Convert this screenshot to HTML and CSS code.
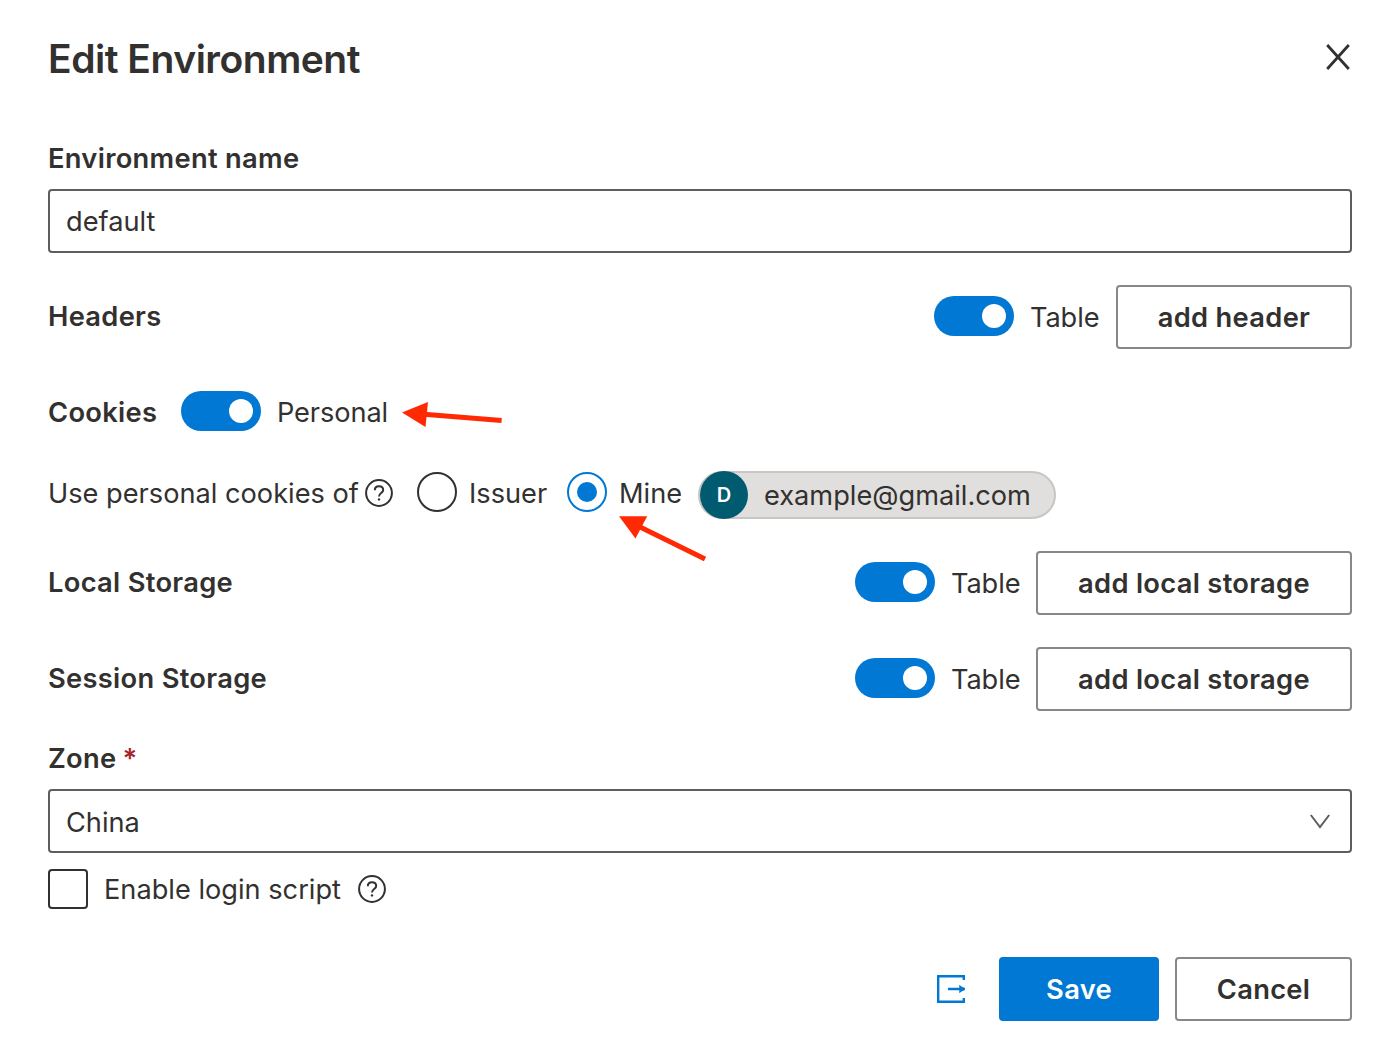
FILE: index.html
```html
<!DOCTYPE html>
<html lang="en">
<head>
<meta charset="utf-8">
<title>Edit Environment</title>
<link rel="stylesheet" href="styles.css">
</head>
<body>
<main class="dialog">
  <header class="dialog-header">
    <h1 class="title">Edit Environment</h1>
    <svg class="close" width="24" height="26" viewBox="0 0 24 26"><path d="M1.2 1L22.8 25M22.8 1L1.2 25"/></svg>
  </header>

  <div class="label name-label">Environment name</div>
  <div class="field"><span class="text">default</span></div>

  <section class="row headers">
    <div class="label">Headers</div>
    <div class="actions">
      <span class="toggle"></span>
      <span class="text toggle-text">Table</span>
      <div class="button add-header">add header</div>
    </div>
  </section>

  <section class="row cookies">
    <div class="label cookies-label">Cookies</div>
    <span class="toggle"></span>
    <span class="text toggle-text">Personal</span>
  </section>

  <section class="row owner">
    <span class="text owner-text">Use personal cookies of</span>
    <svg class="help" width="28" height="28" viewBox="0 0 28 28"><circle cx="14" cy="14" r="12.9"/><path d="M9.8 11.2C9.8 8.6 11.6 7.2 14 7.2S18.2 8.7 18.2 10.9C18.2 14 14 14 14 17.4"/><circle class="dot" cx="14" cy="20.4" r="1.2"/></svg>
    <span class="radio"></span>
    <span class="text issuer">Issuer</span>
    <span class="radio checked"></span>
    <span class="text mine">Mine</span>
    <div class="persona"><span class="avatar">D</span><span class="text">example@gmail.com</span></div>
  </section>

  <section class="row local">
    <div class="label">Local Storage</div>
    <div class="actions">
      <span class="toggle"></span>
      <span class="text toggle-text">Table</span>
      <div class="button add-storage">add local storage</div>
    </div>
  </section>

  <section class="row session">
    <div class="label">Session Storage</div>
    <div class="actions">
      <span class="toggle"></span>
      <span class="text toggle-text">Table</span>
      <div class="button add-storage">add local storage</div>
    </div>
  </section>

  <div class="label zone-label">Zone<span class="required">*</span></div>
  <div class="field select">
    <span class="text">China</span>
    <svg class="chevron" width="20" height="15" viewBox="0 0 20 15"><path d="M.8 1L10 13.2L19.2 1"/></svg>
  </div>

  <section class="row login">
    <span class="checkbox"></span>
    <span class="text login-text">Enable login script</span>
    <svg class="help" width="28" height="28" viewBox="0 0 28 28"><circle cx="14" cy="14" r="12.9"/><path d="M9.8 11.2C9.8 8.6 11.6 7.2 14 7.2S18.2 8.7 18.2 10.9C18.2 14 14 14 14 17.4"/><circle class="dot" cx="14" cy="20.4" r="1.2"/></svg>
  </section>

  <footer class="footer">
    <svg class="export" width="28" height="28" viewBox="0 0 28 28"><path d="M26.8 5V1.2H1.2V26.8H26.8V23M11 14H24"/><path class="head" d="M22.3 9.8Q24 11.8 28 13V15Q24 16.2 22.3 18.2Z"/></svg>
    <div class="button save">Save</div>
    <div class="button cancel">Cancel</div>
  </footer>

  <svg class="arrow arrow-personal" width="102" height="30" viewBox="400 400 102 30"><path class="shaft" d="M424 414.3L501.6 420.6"/><path class="head" d="M402 412.5L428 402L425.5 427Z"/></svg>
  <svg class="arrow arrow-mine" width="90" height="50" viewBox="618 514 90 50"><path class="shaft" d="M637 525.5L705 559"/><path class="head" d="M619 516.2L647.2 516.2L635.5 538.5Z"/></svg>
</main>
</body>
</html>
```
FILE: styles.css
```css
* { box-sizing: border-box; }
body {
  margin: 0;
  background: #fff;
  color: #323130;
  font: 400 27.2px/40px Inter, "Liberation Sans", sans-serif;
}
.dialog {
  position: relative;
  width: 1396px;
  height: 1064px;
  padding: 27px 44px 0 48px;
  overflow: hidden;
  white-space: nowrap;
}
svg { display: block; flex: none; fill: none; stroke: #323130; stroke-width: 2; }
.dialog-header { display: flex; align-items: center; justify-content: space-between; height: 64px; }
.title { margin: 0; font-size: 39px; font-weight: 600; letter-spacing: -.48px; }
.close { margin: -4px 2px 0 0; stroke-width: 2.8; }
.text { padding-top: 2px; }
.label, .button { font-size: 27.3px; font-weight: 600; letter-spacing: .3px; }
.name-label { margin-top: 48px; height: 50px; }
.field { display: flex; align-items: center; justify-content: space-between; height: 64px; border: 2px solid #605e5c; border-radius: 4px; padding: 0 20px 0 16px; }
.select .text { padding-top: 4px; }
.row { display: flex; align-items: center; }
.actions { display: flex; align-items: center; margin-left: auto; }
.headers, .local, .session { height: 64px; margin-top: 32px; }
.toggle { flex: none; width: 80px; height: 40px; margin-top: -2px; border-radius: 20px; background: #0078d4; padding: 8px 8px 8px 48px; }
.toggle::before { content: ""; display: block; width: 24px; height: 24px; border-radius: 50%; background: #fff; }
.toggle-text { width: 86px; margin-left: 16px; letter-spacing: -.1px; }
.actions .toggle-text { width: 85px; }
.headers .actions .toggle-text { width: 86px; }
.button { display: flex; align-items: center; justify-content: center; height: 64px; padding-top: 2px; border: 2px solid #8a8886; border-radius: 4px; }
.add-header { width: 236px; }
.add-storage { width: 316px; }
.cookies { height: 62px; margin-top: 32px; }
.cookies-label { width: 133px; padding-top: 2px; }
.owner { height: 48px; margin-top: 28px; }
.owner-text { width: 317px; margin-top: -4px; }
.owner .help { margin-top: -4px; }
.radio { display: grid; place-items: center; flex: none; width: 40px; height: 40px; margin: -6px 0 0 24px; border: 2px solid #323130; border-radius: 50%; }
.radio.checked { margin-left: 20px; border-color: #0078d4; }
.radio.checked::before { content: ""; width: 20px; height: 20px; border-radius: 50%; background: #0078d4; }
.issuer { width: 78px; margin: -4px 0 0 12px; }
.mine { width: 79px; margin: -4px 0 0 12px; }
.persona { display: flex; align-items: center; width: 358px; height: 48px; border: 2px solid #c8c6c4; border-radius: 24px; background: #e1dfdd; }
.avatar { flex: none; display: grid; place-items: center; width: 48px; height: 48px; margin-right: 16px; border-radius: 50%; background: #005b70; color: #fff; font-size: 20px; font-weight: 600; }
.zone-label { display: flex; gap: 6px; height: 50px; margin-top: 28px; }
.required { color: #a4262c; }
.chevron { stroke: #605e5c; }
.login { height: 40px; margin-top: 16px; }
.checkbox { width: 40px; height: 40px; border: 2px solid #323130; border-radius: 4px; }
.login-text { width: 254px; margin-left: 16px; }
.footer { display: flex; align-items: center; justify-content: flex-end; height: 64px; margin-top: 48px; }
.export { margin-right: 34px; stroke: #0078d4; stroke-width: 2.4; }
.export .head { fill: #0078d4; stroke: none; }
.save { width: 160px; margin-right: 16px; background: #0078d4; border-color: #0078d4; color: #fff; }
.cancel { width: 177px; }
.help .dot { fill: #323130; stroke: none; }
.arrow { position: absolute; stroke: #ff2a04; stroke-width: 5; }
.arrow .head { fill: #ff2a04; stroke: none; }
.arrow-personal { left: 400px; top: 400px; }
.arrow-mine { left: 618px; top: 514px; }
```
